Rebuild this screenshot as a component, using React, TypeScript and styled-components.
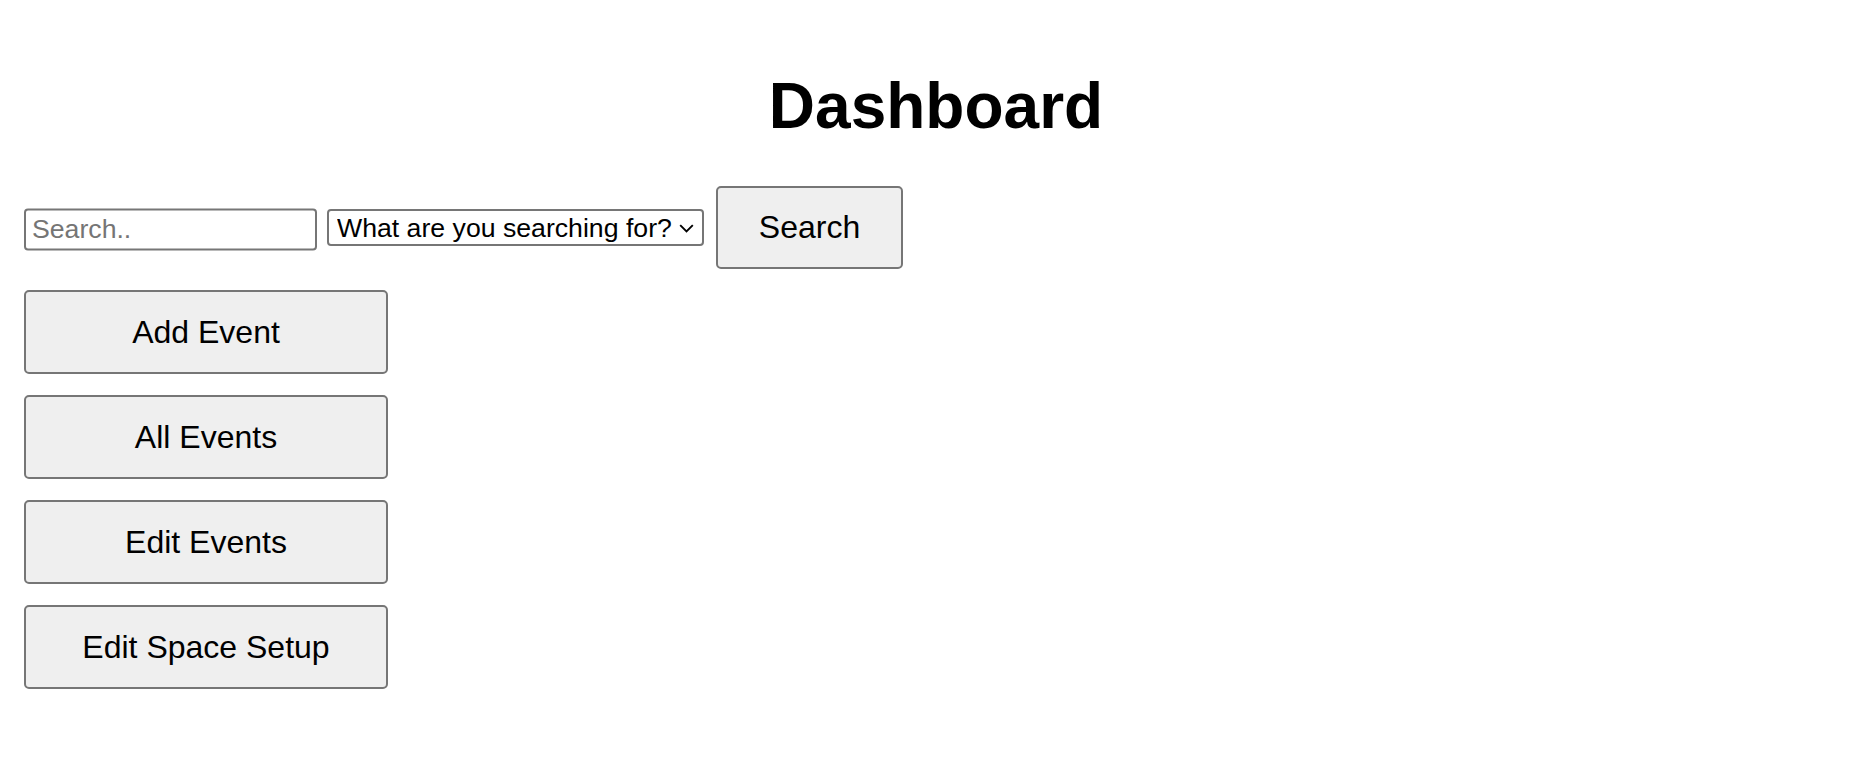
import React from "react";
import styled, { createGlobalStyle } from "styled-components";

const GlobalStyle = createGlobalStyle`
  html, body {
    margin: 0;
    padding: 0;
    background: #ffffff;
  }
  body {
    font-family: "Liberation Sans", Arial, sans-serif;
    color: #000000;
  }
`;

const Page = styled.main`
  display: flex;
  flex-direction: column;
  align-items: flex-start;
  padding: 69px 24px 40px 24px;
  box-sizing: border-box;
  width: 100%;
`;

const Title = styled.h1`
  align-self: stretch;
  margin: 0;
  padding-left: 14px;
  text-align: center;
  font-family: "Liberation Sans", Arial, sans-serif;
  font-weight: 700;
  font-size: 64px;
  line-height: normal;
`;

const SearchRow = styled.form`
  display: flex;
  align-items: center;
  margin: 43px 0 0 0;
`;

const SearchInput = styled.input`
  box-sizing: border-box;
  width: 293px;
  height: 42px;
  margin: 0 10px 0 0;
  padding: 2px 6px;
  border: 2px solid #767676;
  border-radius: 4px;
  background: #ffffff;
  font-family: "Liberation Sans", Arial, sans-serif;
  font-size: 26.67px;
  color: #000000;
  outline: none;
  transform: translateY(1.5px);

  &::placeholder {
    color: #757575;
  }
`;

const SelectWrap = styled.div`
  position: relative;
  display: flex;
  margin-right: 12px;
`;

const Select = styled.select`
  box-sizing: border-box;
  appearance: none;
  -webkit-appearance: none;
  width: 377px;
  height: 37px;
  margin: 0;
  padding: 0 30px 0 8px;
  border: 2px solid #767676;
  border-radius: 4px;
  background: #ffffff;
  font-family: "Liberation Sans", Arial, sans-serif;
  font-size: 26.67px;
  color: #000000;
  outline: none;
`;

const Chevron = styled.svg`
  position: absolute;
  right: 10px;
  top: 50%;
  margin-top: -4px;
  width: 15px;
  height: 9px;
  pointer-events: none;
`;

const Button = styled.button<{ $w: number }>`
  box-sizing: border-box;
  width: ${(p) => p.$w}px;
  height: 84px;
  margin: 0;
  padding: 0;
  border: 2px solid #767676;
  border-radius: 5px;
  background: #efefef;
  font-family: "Liberation Sans", Arial, sans-serif;
  font-size: 32px;
  color: #000000;
  cursor: pointer;
`;

const SearchButton = styled(Button)`
  height: 83px;
`;

const ActionList = styled.nav`
  display: flex;
  flex-direction: column;
  gap: 21px;
  margin-top: 21px;
`;

const actions = ["Add Event", "All Events", "Edit Events", "Edit Space Setup"];

export default function App() {
  return (
    <>
      <GlobalStyle />
      <Page>
        <Title>Dashboard</Title>
        <SearchRow onSubmit={(e) => e.preventDefault()}>
          <SearchInput type="text" placeholder="Search.." />
          <SelectWrap>
            <Select defaultValue="">
              <option value="">What are you searching for?</option>
              <option value="events">Events</option>
              <option value="spaces">Spaces</option>
            </Select>
            <Chevron viewBox="0 0 15 9" fill="none">
              <path d="M1.2 1.2 L7.5 7.5 L13.8 1.2" stroke="#000" strokeWidth="1.9" />
            </Chevron>
          </SelectWrap>
          <SearchButton $w={187} type="submit">
            Search
          </SearchButton>
        </SearchRow>
        <ActionList>
          {actions.map((a) => (
            <Button key={a} $w={364} type="button">
              {a}
            </Button>
          ))}
        </ActionList>
      </Page>
    </>
  );
}
